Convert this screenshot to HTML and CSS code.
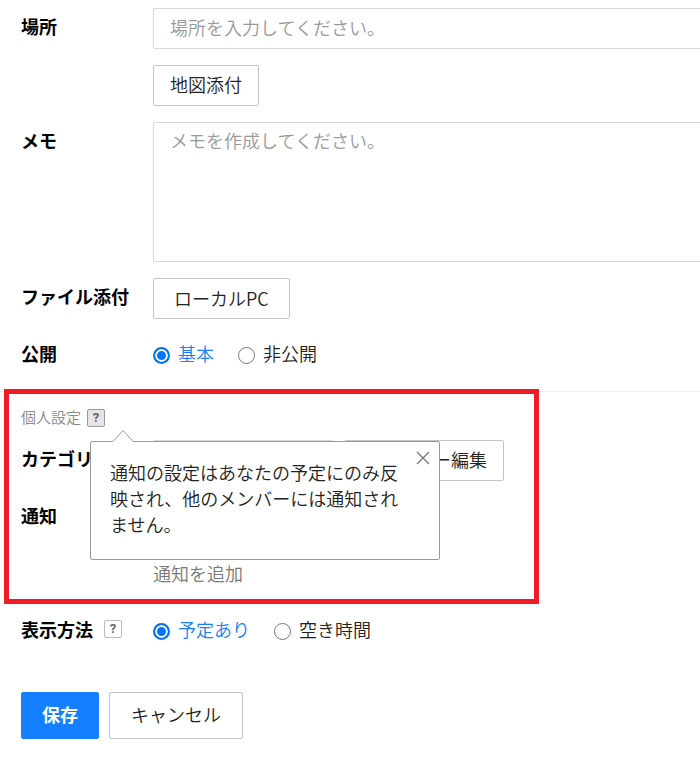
FILE: index.html
```html
<!DOCTYPE html>
<html lang="ja">
<head>
<meta charset="utf-8">
<meta name="viewport" content="width=device-width, initial-scale=1">
<title>予定</title>
<link rel="stylesheet" href="styles.css">
</head>
<body>
<form class="form">
  <div class="row">
    <label class="label" for="place">場所</label>
    <div class="stack">
      <input class="field" id="place" type="text" placeholder="場所を入力してください。">
      <button class="button" type="button">地図添付</button>
    </div>
  </div>
  <div class="row">
    <label class="label" for="memo">メモ</label>
    <textarea class="field area" id="memo" placeholder="メモを作成してください。"></textarea>
  </div>
  <div class="row">
    <span class="label">ファイル添付</span>
    <button class="button wide" type="button">ローカルPC</button>
  </div>
  <div class="row" role="radiogroup" aria-labelledby="visibility">
    <span class="label" id="visibility">公開</span>
    <div class="choices">
      <label class="choice"><input type="radio" name="visibility" checked><span>基本</span></label>
      <label class="choice"><input type="radio" name="visibility"><span>非公開</span></label>
    </div>
  </div>

  <section class="personal">
    <div class="heading">
      <h2 class="title">個人設定</h2>
      <div class="tip-anchor">
        <button class="help active" type="button">?</button>
        <div class="tip" role="tooltip">
          <svg class="tip-arrow" width="22" height="13" viewBox="0 0 22 13"><path d="M1 12.5 11 1.5 21 12.5V13H1Z" fill="#fff"/><path d="M0 12.5H1L11 1.5 21 12.5H22" fill="none" stroke="#999"/></svg>
          <p class="tip-text">通知の設定はあなたの予定にのみ反映され、他のメンバーには通知されません。</p>
          <button class="close" type="button"><svg width="14" height="14" viewBox="0 0 14 14"><path d="M1 1 13 13M13 1 1 13" fill="none" stroke="#777" stroke-width="1.3"/></svg></button>
        </div>
      </div>
    </div>
    <div class="row">
      <label class="label" for="category">カテゴリ</label>
      <div class="pair">
        <select class="select" id="category"><option></option></select>
        <button class="button" type="button">カテゴリー編集</button>
      </div>
    </div>
    <div class="row">
      <span class="label">通知</span>
    </div>
    <div class="row">
      <span class="label"></span>
      <button class="add" type="button">通知を追加</button>
    </div>
    <div class="frame"></div>
  </section>

  <div class="row" role="radiogroup" aria-labelledby="display">
    <div class="label with-help"><span id="display">表示方法</span><button class="help" type="button">?</button></div>
    <div class="choices">
      <label class="choice"><input type="radio" name="display" checked><span>予定あり</span></label>
      <label class="choice"><input type="radio" name="display"><span>空き時間</span></label>
    </div>
  </div>

  <div class="actions">
    <button class="action save" type="submit">保存</button>
    <button class="action" type="button">キャンセル</button>
  </div>
</form>
</body>
</html>
```
FILE: styles.css
```css
* {
  box-sizing: border-box;
}

body {
  margin: 0;
  background: #fff;
  color: #222;
  font: 350 18px/26px "Noto Sans CJK JP", sans-serif;
}

button,
input,
textarea,
select {
  margin: 0;
  color: inherit;
  font: inherit;
}

.form {
  display: flex;
  flex-direction: column;
  gap: 16px;
  padding: 8px 0 19px 21px;
}

.row {
  display: grid;
  grid-template-columns: 132px minmax(0, 1fr);
  min-height: 41px;
  justify-items: start;
}

.label {
  color: #000;
  font-weight: 700;
  line-height: 36px;
  white-space: nowrap;
}

.with-help {
  display: flex;
  align-items: center;
  gap: 11px;
  height: 36px;
}

.stack {
  display: flex;
  flex-direction: column;
  align-items: flex-start;
  gap: 16px;
  width: 100%;
}

.field {
  display: block;
  width: 100%;
  height: 41px;
  padding: 0 16px 4px;
  border: 1px solid #d8d8d8;
  border-right: 0;
  border-radius: 2px 0 0 2px;
  background: #fff;
}

.field::placeholder {
  color: #999;
}

.area {
  height: 140px;
  padding: 4px 16px;
  resize: none;
}

.button {
  height: 41px;
  padding: 0 16px 4px;
  border: 1px solid #c4c4c4;
  border-radius: 2px;
  background: #fff;
}

.wide {
  padding: 0 20px 2px;
}

.choices {
  display: flex;
  align-items: center;
  gap: 24px;
  height: 40px;
}

.choice {
  display: flex;
  align-items: center;
  gap: 8px;
}

.choice span {
  padding-bottom: 4px;
}

.choice input {
  appearance: none;
  width: 17px;
  height: 17px;
  border: 1px solid #767676;
  border-radius: 50%;
}

.choice input:checked {
  border: 2px solid #0075ff;
  background: #0075ff;
  box-shadow: inset 0 0 0 2px #fff;
}

.choice input:checked + span {
  color: #1480ff;
}

.personal {
  position: relative;
  display: flex;
  flex-direction: column;
  gap: 16px;
  margin: -1px 0 0 -21px;
  padding-left: 21px;
  border-top: 1px solid #eee;
}

.heading {
  display: flex;
  align-items: center;
  gap: 6px;
  height: 32px;
  padding-top: 20px;
}

.title {
  margin: 0;
  padding-bottom: 2px;
  color: #888;
  font-size: 15px;
  font-weight: 350;
}

.tip-anchor {
  position: relative;
  z-index: 1;
  display: flex;
}

.help {
  width: 18px;
  height: 18px;
  padding: 0;
  border: 1px solid #bbb;
  border-radius: 2px;
  background: #fff;
  color: #666;
  font: 700 13px/16px Roboto, sans-serif;
}

.help.active {
  border-color: #999;
  background: #e5e5e5;
}

.tip {
  position: absolute;
  top: 32px;
  left: 3px;
  width: 350px;
  padding: 17px 36px 22px 19px;
  border: 1px solid #999;
  border-radius: 2px;
  background: #fff;
}

.tip-arrow {
  position: absolute;
  top: -13px;
  left: 21px;
}

.tip-text {
  margin: 0;
}

.close {
  position: absolute;
  top: 9px;
  right: 9px;
  display: flex;
  padding: 0;
  border: 0;
  background: none;
}

.pair {
  display: flex;
  gap: 10px;
}

.select {
  appearance: none;
  width: 181px;
  height: 41px;
  border: 1px solid #d8d8d8;
  border-radius: 2px;
  background: #fff;
}

.add {
  padding: 0 0 4px;
  border: 0;
  background: none;
  color: #777;
}

.frame {
  position: absolute;
  top: -3px;
  left: 4px;
  bottom: -9px;
  width: 535px;
  border: 5px solid #ee1c25;
  pointer-events: none;
}

.actions {
  display: flex;
  gap: 10px;
  margin-top: 24px;
}

.action {
  height: 47px;
  padding: 0 21px 4px;
  border: 1px solid #c4c4c4;
  border-radius: 2px;
  background: #fff;
}

.save {
  padding: 0 20px 4px;
  border-color: #1480ff;
  background: #1480ff;
  color: #fff;
  font-weight: 700;
}
```
